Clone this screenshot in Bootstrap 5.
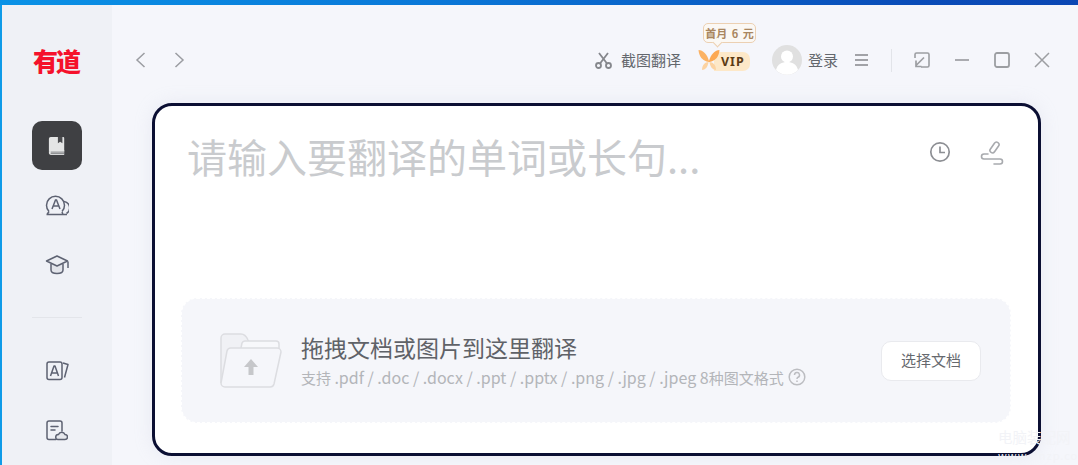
<!doctype html>
<html lang="zh">
<head>
<meta charset="utf-8">
<title>有道</title>
<link href="https://cdn.jsdelivr.net/npm/bootstrap@5.3.0/dist/css/bootstrap.min.css" rel="stylesheet">
<style>
html,body{height:465px;overflow:hidden}
body{font-family:"Noto Sans CJK SC","Noto Sans",sans-serif;background:#f5f6fb;color:#666a70}
.top-strip{height:5px;background:linear-gradient(90deg,#0a92e6 0%,#0a78d8 40%,#0a4cb8 85%,#0b47b4 100%)}
.app-shell{height:460px}
.side-rail{width:112px;flex:none;background:#eff1f6;border-left:2px solid #0f9be8;padding-left:30px}
.rail-logo{height:50px;width:50px;margin-top:30px;margin-bottom:36px;margin-left:-1px;color:#f5112b;font-size:25px;font-weight:900;letter-spacing:-2px;white-space:nowrap;line-height:50px}
.rail-tile{width:50px;height:50px;margin-bottom:10px;border-radius:10px}
.rail-tile.is-on{background:#3f4043}
.rail-rule{width:50px;height:1px;background:#e3e5ea;margin:18px 0 28px}
.main-pane{flex:1 1 auto;min-width:0}
.tool-row{height:98px;padding-top:12px;position:relative}
.nav-arrows{margin-left:21px;gap:22px}
.ico-16{width:16px;height:16px;display:block}
.tool-txt{font-size:15px;color:#63676d;line-height:20px}
.tool-shot{margin-left:auto;gap:9px}
.vip-wrap{position:relative;margin-left:18px;width:54px;height:22px;left:-1px}
.vip-tag{position:absolute;left:16px;top:3px;height:19px;width:36px;background:#fde8c8;border-radius:0 7px 7px 0;font-size:12.5px;font-weight:700;color:#5b3a14;letter-spacing:1px;line-height:19px;padding-left:7px;font-family:"Noto Sans",sans-serif}
.vip-fly{position:absolute;left:0;top:0}
.vip-bubble{position:absolute;left:5px;top:-26px;width:53px;height:20px;border:1px solid #ecd0b2;border-radius:5px;background:#fbf8f4;font-size:11px;font-weight:700;color:#a98660;text-align:center;line-height:18px;white-space:nowrap;word-spacing:2px}
.vip-bubble::after{content:"";position:absolute;left:10px;bottom:-4px;width:7px;height:7px;background:#fbf8f4;border-right:1px solid #ecd0b2;border-bottom:1px solid #ecd0b2;transform:rotate(45deg)}
.user-wrap{margin-left:19px;gap:6px}
.user-face{width:30px;height:30px;display:block}
.menu-ico{margin-left:17px}
.tool-sep{width:1px;height:23px;background:#e2e4e9;margin:0 22px 0 23px}
.win-btns{gap:24px;margin-right:28px}
.sheet-wrap{padding:0 37px 0 40px}
.input-sheet{height:353px;background:#fff;border:3px solid #0b0f33;border-radius:20px;padding:0 27px 0 27px;position:relative;box-shadow:0 0 18px rgba(190,195,215,.22)}
.prompt-row{height:192px;padding:24px 0 0 5px}
.prompt-txt{font-size:40px;line-height:52px;color:#c9cbce;font-weight:400;letter-spacing:0;white-space:nowrap}
.prompt-tools{gap:29px;padding:11px 7px 0 0}
.drop-area{height:125px;margin-left:-1px;background:#f5f6fa;border:1px dashed #fff;border-radius:16px;padding:0 29px 0 38px}
.drop-main{font-size:23px;line-height:32px;color:#5f6268;white-space:nowrap}
.drop-sub{font-size:15px;line-height:20px;color:#b3b5b9;white-space:pre;margin-top:4px}
.sub-latin{font-size:16px}
.drop-text{margin-left:19px;margin-top:-3px}
.pick-btn{width:100px;height:40px;background:#fff;border:1px solid #e9eaee;border-radius:10px;font-size:15px;color:#66696e;padding:0;--bs-btn-hover-bg:#fff}
.water-mark{position:absolute;left:843px;top:322px;font-size:14.500px;line-height:18px;width:74px;white-space:nowrap;letter-spacing:0;color:#f2f3f7}
.water-mark small{display:block;font-size:11px;letter-spacing:1px}
</style>
</head>
<body>
<div class="top-strip"></div>
<div class="app-shell d-flex">
  <aside class="side-rail d-flex flex-column">
    <div class="rail-logo text-center">有道</div>
    <div class="rail-tile is-on d-flex align-items-center justify-content-center">
      <svg width="18" height="20" viewBox="0 0 20 22"><path d="M3 1h14a1 1 0 0 1 1 1v15H4a2 2 0 0 0-3 1V3a2 2 0 0 1 2-2z" fill="#e4e5e5"/><path d="M1 18a2.500 2.500 0 0 1 2.500-2.500H18V21H3.500A2.500 2.500 0 0 1 1 18z" fill="#e4e5e5"/><path d="M3 17.800h15M3 19.500h15" stroke="#77797c" stroke-width="1"/><path d="M11 1h5v7l-2.500-1.800L11 8z" fill="#4a4b4e"/></svg>
    </div>
    <div class="rail-tile d-flex align-items-center justify-content-center">
      <svg width="24" height="22" viewBox="0 0 24 22" fill="none" stroke="#5d6272" stroke-width="1.500"><path d="M4 17.500a9 9 0 1 1 13 0"/><path d="M19 7.500a6.500 6.500 0 0 1 2.500 12"/><path d="M1.500 20.500h20.500M4 17.500l-2 3M17 18l1 2.500"/><path d="M7 15l3.500-9h1l3.500 9M8.200 12h5.600"/></svg>
    </div>
    <div class="rail-tile d-flex align-items-center justify-content-center">
      <svg width="25" height="20" viewBox="0 0 25 20" fill="none" stroke="#5d6272" stroke-width="1.500" stroke-linejoin="round"><path d="M6 9v6c0 2.500 3 3.500 6 3.500s6-1 6-3.500V9" fill="#e2e4ea"/><path d="M12 1L1.500 6 12 11l10.500-5z" fill="#eceef3"/><path d="M23 6.500V13"/></svg>
    </div>
    <div class="rail-rule"></div>
    <div class="rail-tile d-flex align-items-center justify-content-center">
      <svg width="23" height="20" viewBox="0 0 23 20" fill="none" stroke="#5d6272" stroke-width="1.500" stroke-linejoin="round"><rect x="1" y="1" width="15" height="17.500" rx="2"/><path d="M4.500 15l3.500-10h1l3.500 10M5.800 12h5.400"/><path d="M17 2l5 1.500-3.500 13"/></svg>
    </div>
    <div class="rail-tile d-flex align-items-center justify-content-center">
      <svg width="22" height="21" viewBox="0 0 22 21" fill="none" stroke="#5d6272" stroke-width="1.500" stroke-linecap="round"><path d="M10 19.500H3a2 2 0 0 1-2-2V3a2 2 0 0 1 2-2h11a2 2 0 0 1 2 2v8"/><path d="M5 6.500h7M5 10h4"/><path d="M12 19.500a2.500 2.500 0 0 1 .5-5 3.500 3.500 0 0 1 6.500 0 2.500 2.500 0 0 1 0 5z" fill="#e6e8ed"/></svg>
    </div>
  </aside>
  <main class="main-pane d-flex flex-column">
    <header class="tool-row d-flex align-items-center">
      <div class="nav-arrows d-flex">
        <svg class="ico-16" viewBox="0 0 16 16" fill="none" stroke="#9b9da2" stroke-width="1.500"><path d="M11.500 1L4 8l7.500 7"/></svg>
        <svg class="ico-16" viewBox="0 0 16 16" fill="none" stroke="#9b9da2" stroke-width="1.500"><path d="M4.500 1L12 8l-7.500 7"/></svg>
      </div>
      <div class="tool-shot d-flex align-items-center">
        <svg width="17" height="17" viewBox="0 0 17 17" fill="none" stroke="#85878c" stroke-width="1.800"><circle cx="3.500" cy="13.500" r="2.500"/><circle cx="13.500" cy="13.500" r="2.500"/><path d="M5 11.500L13 1M12 11.500L4 1"/></svg>
        <span class="tool-txt">截图翻译</span>
      </div>
      <div class="vip-wrap">
        <span class="vip-tag">VIP</span>
        <svg class="vip-fly" width="22" height="22" viewBox="0 0 22 22"><path d="M11 12C9 5 5 1 .5 1 1 7 4 12 11 13z" fill="#fbb263"/><path d="M11 12C13 5 17 1 21.500 1 21 7 18 12 11 13z" fill="#fca851"/><path d="M10.500 13C7 13 4 16 4 21c3 0 6-3 6.500-8z" fill="#fcd3a2"/><path d="M11.500 13c3.500 0 6.500 3 6.500 8-3 0-6-3-6.500-8z" fill="#fcd3a2"/></svg>
        <div class="vip-bubble">首月 6 元</div>
      </div>
      <div class="user-wrap d-flex align-items-center">
        <svg class="user-face" viewBox="0 0 30 30"><circle cx="15" cy="15" r="15" fill="#e0e0e0"/><circle cx="15" cy="11.500" r="6" fill="#fff"/><path d="M4 25c1.500-6 6-8 11-8s9.500 2 11 8a15 15 0 0 1-22 0z" fill="#fff"/></svg>
        <span class="tool-txt">登录</span>
      </div>
      <svg class="menu-ico" width="13" height="12" viewBox="0 0 13 12" stroke="#85878c" stroke-width="1.500"><path d="M0 1h13M0 6h13M0 11h13"/></svg>
      <div class="tool-sep"></div>
      <div class="win-btns d-flex align-items-center">
        <svg class="ico-16" viewBox="0 0 16 16" fill="none" stroke="#9c9ea2" stroke-width="1.600"><path d="M1 6V2.500A1.500 1.500 0 0 1 2.500 1h11A1.500 1.500 0 0 1 15 2.500v11a1.500 1.500 0 0 1-1.500 1.500H7"/><path d="M10 5.500L2 13.500M2 8.500v6h5.500" stroke-width="1.700"/></svg>
        <svg class="ico-16" viewBox="0 0 16 16" stroke="#9c9ea2" stroke-width="1.700"><path d="M1 8h14"/></svg>
        <svg class="ico-16" viewBox="0 0 16 16" fill="none" stroke="#9c9ea2" stroke-width="1.800"><rect x="1" y="1" width="14" height="14" rx="2"/></svg>
        <svg class="ico-16" viewBox="0 0 16 16" stroke="#9c9ea2" stroke-width="1.500"><path d="M1 1l14 14M15 1L1 15"/></svg>
      </div>
    </header>
    <div class="sheet-wrap">
      <section class="input-sheet">
        <div class="prompt-row d-flex justify-content-between align-items-start">
          <div class="prompt-txt">请输入要翻译的单词或长句...</div>
          <div class="prompt-tools d-flex align-items-start">
            <svg width="22" height="22" viewBox="0 0 22 22" fill="none" stroke="#8d8f94" stroke-width="1.700"><circle cx="11" cy="11" r="9.200"/><path d="M11 5.500V11.500h5"/></svg>
            <svg width="24" height="24" viewBox="0 0 24 24" fill="none" stroke="#a8aaae" stroke-width="1.600" stroke-linecap="round"><rect x="12" y=".5" width="5" height="12" rx="2.500" transform="rotate(35 14.500 6.500)"/><path d="M8 13H4a2.500 2.500 0 0 0 0 5h16a2 2 0 0 1 0 5h-6"/></svg>
          </div>
        </div>
        <div class="drop-area d-flex align-items-center">
          <svg width="62" height="56" viewBox="0 0 62 56" fill="none" stroke="#dcdde1" stroke-width="1.500" stroke-linejoin="round"><path d="M1 50V5a4 4 0 0 1 4-4h16c3 0 5 1.500 7 6l2 4" fill="#f0f1f5"/><path d="M21 15l1-5a3 3 0 0 1 3-2h31a3 3 0 0 1 3 3v5" fill="#f7f8fb"/><path d="M7 18a4 4 0 0 1 4-3h46a4 4 0 0 1 4 4l-7 32a4 4 0 0 1-4 3H5a4 4 0 0 1-4-4z" fill="#f5f6fa"/><path d="M31 26l-7 8h4.500v8h5v-8H38z" fill="#c6c7ca" stroke="none"/></svg>
          <div class="drop-text flex-grow-1">
            <div class="drop-main">拖拽文档或图片到这里翻译</div>
            <div class="drop-sub d-flex align-items-center"><span>支持 <span class="sub-latin">.pdf / .doc / .docx / .ppt / .pptx / .png / .jpg / .jpeg 8</span>种图文格式</span><svg class="ms-1" width="18" height="18" viewBox="0 0 18 18" fill="none" stroke="#bcbdc1" stroke-width="1.500"><circle cx="9" cy="9" r="7.800"/><path d="M6.500 7a2.500 2.500 0 1 1 3.500 2.300c-.7.300-1 .8-1 1.700"/><path d="M9 12.500v1.500"/></svg></div>
          </div>
          <button type="button" class="btn pick-btn">选择文档</button>
        </div>
        <div class="water-mark">电脑装配网<small>www.dnzp.com</small></div>
      </section>
    </div>
  </main>
</div>
<script src="https://cdn.jsdelivr.net/npm/bootstrap@5.3.0/dist/js/bootstrap.bundle.min.js"></script>
</body>
</html>
